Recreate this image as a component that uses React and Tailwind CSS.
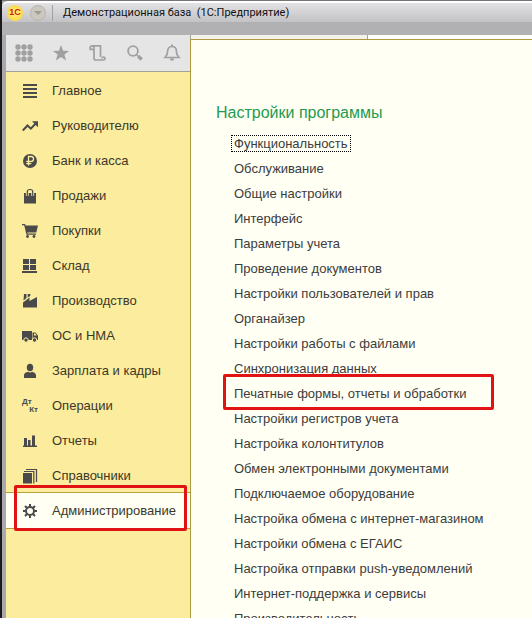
import React from "react";

const tools = [
  {
    label: "Разделы",
    art: (
      <g>
        {[4, 10, 16].map((y) =>
          [4, 10, 16].map((x) => <circle key={`${x}-${y}`} cx={x} cy={y} r="2.7" fill="currentColor" />)
        )}
      </g>
    ),
  },
  {
    label: "Избранное",
    art: <path d="M10 2l2.1 5.7 6 .2-4.7 3.7 1.7 5.8-5.1-3.4-5.1 3.4 1.700-5.800L1.900 7.900l6-.2z" fill="currentColor" />,
  },
  {
    label: "История",
    art: (
      <path
        d="M4 2.800h8.500V14M4 2.800a1.800 1.800 0 0 0-1.800 1.800v1.700H6M4 2.800A2 2 0 0 1 6 4.800V15a2 2 0 0 0 2 2h7.500a1.500 1.500 0 1 0-1.500-1.500"
        fill="none"
        stroke="currentColor"
        strokeWidth="1.7"
      />
    ),
  },
  {
    label: "Поиск",
    art: (
      <g fill="none" stroke="currentColor">
        <circle cx="8" cy="8" r="4.9" strokeWidth="1.8" />
        <path d="M11.500 11.500l2 2" strokeWidth="1.500" />
        <path d="M13.300 13.300l3.400 3.200" strokeWidth="3.6" />
      </g>
    ),
  },
  {
    label: "Уведомления",
    art: (
      <g>
        <path
          d="M10 3.500c-3 0-4.400 2.300-4.400 4.800 0 3.400-.8 4.500-2.600 6.200h14c-1.800-1.700-2.600-2.800-2.600-6.200C14.400 5.800 13 3.500 10 3.500z"
          fill="none"
          stroke="currentColor"
          strokeWidth="1.7"
        />
        <path d="M9 1.500h2v2H9zM7.800 15.500h4.400a2.200 2.200 0 0 1-4.400 0z" fill="currentColor" />
      </g>
    ),
  },
];

const sections = [
  { label: "Главное", art: <path d="M1 1h14v2H1zM1 5h14v2H1zM1 9h14v2H1zM1 13h14v2H1z" fill="currentColor" /> },
  {
    label: "Руководителю",
    art: (
      <g>
        <path d="M.8 12.500L5.500 7.500l3.300 3.200 4.700-5" fill="none" stroke="currentColor" strokeWidth="2" />
        <path d="M10 3.200h6v6z" fill="currentColor" />
      </g>
    ),
  },
  {
    label: "Банк и касса",
    art: (
      <g>
        <circle cx="8" cy="8" r="7" fill="currentColor" />
        <path d="M6.500 12.500v-9h2.600a2.400 2.400 0 0 1 0 4.900H4.300M4.300 10.500h5" fill="none" stroke="#fbec9e" strokeWidth="1.300" />
      </g>
    ),
  },
  {
    label: "Продажи",
    art: (
      <g>
        <path d="M2 5h12v10.500H2z" fill="currentColor" />
        <path d="M5.300 8V3.500C5.300.8 10.700.8 10.700 3.500V8" fill="none" stroke="#fbec9e" strokeWidth="2.800" />
        <path d="M5.300 8V3.500C5.300.8 10.700.8 10.700 3.500V8" fill="none" stroke="currentColor" strokeWidth="1.200" />
      </g>
    ),
  },
  {
    label: "Покупки",
    art: (
      <g>
        <path d="M0 1h3l.6 1.500H16l-1.700 7H5.300l.3 1H14v1.200H4.500L2.200 2.300H0z" fill="currentColor" />
        <circle cx="5.500" cy="13.500" r="1.400" fill="currentColor" />
        <circle cx="12" cy="13.500" r="1.400" fill="currentColor" />
      </g>
    ),
  },
  {
    label: "Склад",
    art: <path d="M1 1h6v5H1zM8 1h6v5H8zM1 7h6v5H1zM8 7h6v5H8zM0 13h15v2H0z" fill="currentColor" />,
  },
  {
    label: "Производство",
    art: <path d="M1 14.500V9.500l6.500-5v3.500L15 4v10.500zM2 1h2.500v4L1.500 7.500zM5.700 1h2.800l-.4 2L5.700 4.500z" fill="currentColor" />,
  },
  {
    label: "ОС и НМА",
    art: (
      <g>
        <path d="M0 3h10v9H0z" fill="currentColor" />
        <path d="M10.500 4.500h3L16 7.500V12h-5.500z" fill="currentColor" />
        <path d="M12 5.500h1.300l1.400 2H12z" fill="#fbec9e" />
        <circle cx="4" cy="12" r="2.200" fill="currentColor" stroke="#fbec9e" />
        <circle cx="12.500" cy="12" r="2.200" fill="currentColor" stroke="#fbec9e" />
      </g>
    ),
  },
  {
    label: "Зарплата и кадры",
    art: (
      <g fill="currentColor">
        <ellipse cx="8" cy="4.500" rx="3.200" ry="3.800" />
        <path d="M2 15v-2.500C2 10 4.500 9.300 6 8.800c1 .9 3 .9 4 0 1.500.5 4 1.200 4 3.700V15z" />
      </g>
    ),
  },
  { label: "Операции", art: null },
  {
    label: "Отчеты",
    art: <path d="M2 5h3v8H2zM6 7h2.500v6H6zM10 2.500h3V13h-3zM1 12.500h14V14H1z" fill="currentColor" />,
  },
  {
    label: "Справочники",
    art: (
      <g>
        <path d="M1 5h9v10.500H1z" fill="currentColor" />
        <path d="M2 3.500h9.800V15.500M4 1.500h10.500V14" fill="none" stroke="currentColor" strokeWidth="1.200" />
      </g>
    ),
  },
  {
    label: "Администрирование",
    active: true,
    art: (
      <g fill="none" stroke="currentColor">
        <circle cx="8" cy="8" r="4" strokeWidth="2" />
        <path
          d="M8 1v2.500M8 12.500V15M1 8h2.500M12.500 8H15M3 3l1.800 1.800M11.200 11.200L13 13M3 13l1.800-1.800M11.200 4.800L13 3"
          strokeWidth="2"
        />
      </g>
    ),
  },
];

const settings = [
  "Функциональность",
  "Обслуживание",
  "Общие настройки",
  "Интерфейс",
  "Параметры учета",
  "Проведение документов",
  "Настройки пользователей и прав",
  "Органайзер",
  "Настройки работы с файлами",
  "Синхронизация данных",
  "Печатные формы, отчеты и обработки",
  "Настройки регистров учета",
  "Настройка колонтитулов",
  "Обмен электронными документами",
  "Подключаемое оборудование",
  "Настройка обмена с интернет-магазином",
  "Настройки обмена с ЕГАИС",
  "Настройка отправки push-уведомлений",
  "Интернет-поддержка и сервисы",
  "Производительность",
];

function TitleBar() {
  return (
    <header className="flex h-[35px] shrink-0 flex-col border-t border-[#77757a] bg-[#b1b1b4]">
      <div className="flex h-[21px] items-center rounded-tl-md border-t-2 border-white bg-linear-to-b from-[#e2e2e4] to-[#c3c3c6] pl-[5px]">
        <span className="flex size-4 items-center justify-center rounded-full bg-radial from-[#fff27a] to-[#f7cf2e] text-[9px] leading-none font-bold text-[#d3190f]">
          1С
        </span>
        <button
          type="button"
          aria-label="Меню окна"
          className="ml-[7px] flex size-4 items-center justify-center rounded-full border border-[#b9b5ad] bg-[#cbc8c2] text-[#a09a90]"
        >
          <svg viewBox="0 0 8 4" className="h-1 w-2" aria-hidden="true">
            <path d="M0 0h8L4 4z" fill="currentColor" />
          </svg>
        </button>
        <span className="ml-1.5 h-4 border-l border-[#a0a0a3]" />
        <h1 className="ml-2.5 font-['Roboto','Liberation_Sans',sans-serif] text-[11px] leading-4 whitespace-pre text-[#111]">
          {"Демонстрационная база  (1С:Предприятие)"}
        </h1>
      </div>
    </header>
  );
}

function Sidebar() {
  return (
    <aside className="flex w-[184px] shrink-0 flex-col bg-[#fbec9e]">
      <div className="flex h-[37px] shrink-0 items-center justify-between border-b border-[#a3a19a] bg-[#e5e5e5] px-2 text-[#a0a0a0]">
        {tools.map((t) => (
          <button key={t.label} type="button" aria-label={t.label} className="size-5">
            <svg viewBox="0 0 20 20" className="size-5" aria-hidden="true">
              {t.art}
            </svg>
          </button>
        ))}
      </div>
      <ul className="pt-px">
        {sections.map((s) => (
          <li
            key={s.label}
            className={s.active ? "relative -mt-px border-y border-[#b5a03c] bg-[#fffff4]" : "relative"}
          >
            <button type="button" className="flex h-[35px] w-full items-center gap-3.5 pl-4 text-[#4a4a4a]">
              {s.art ? (
                <svg viewBox="0 0 16 16" className="size-4" aria-hidden="true">
                  {s.art}
                </svg>
              ) : (
                <span className="flex size-4 flex-col justify-center text-[8px] leading-[8px] font-bold" aria-hidden="true">
                  <span className="text-left">Дт</span>
                  <span className="text-right">Кт</span>
                </span>
              )}
              <span className="text-[13px] leading-4 whitespace-nowrap text-[#3c3829]">{s.label}</span>
            </button>
            {s.active && (
              <span className="pointer-events-none absolute -top-2 right-[3px] -bottom-[3px] left-2 z-10 rounded-xs border-3 border-[#e01212]" />
            )}
          </li>
        ))}
      </ul>
    </aside>
  );
}

function SettingsPanel() {
  return (
    <main className="flex min-w-0 flex-1 flex-col">
      <div className="flex h-1 shrink-0 bg-white">
        <span className="w-[178px] border-x border-[#a3a19a] bg-[#f3f3ea]" />
      </div>
      <section className="flex-1 border-t border-l border-[#ad9a3c] bg-[#fffff4] pt-[63px] pl-[25px]">
        <h2 className="text-[16px] leading-5 text-[#1f9a50]">Настройки программы</h2>
        <ul className="mt-2 pl-[15px]">
          {settings.map((name, i) => (
            <li key={name} className="flex h-[25px] items-center">
              <a
                href="#"
                className={
                  i === 0
                    ? "border border-dotted border-black px-0.5 text-[13px] leading-[15px] whitespace-nowrap text-[#3c3c3c]"
                    : "relative px-[3px] text-[13px] leading-4 whitespace-nowrap text-[#3c3c3c]"
                }
              >
                {name}
                {i === 10 && (
                  <span className="pointer-events-none absolute -top-3 -right-6 -bottom-2 -left-2 rounded-xs border-3 border-[#e01212]" />
                )}
              </a>
            </li>
          ))}
        </ul>
      </section>
    </main>
  );
}

export default function App() {
  return (
    <div className="flex h-screen overflow-hidden border-l-2 border-[#1c1a1c] bg-[#aaa8ad] font-['Liberation_Sans',Arial,sans-serif]">
      <div className="flex min-w-0 flex-1 flex-col">
        <TitleBar />
        <div className="flex min-h-0 flex-1 pl-1">
          <Sidebar />
          <SettingsPanel />
        </div>
      </div>
    </div>
  );
}
